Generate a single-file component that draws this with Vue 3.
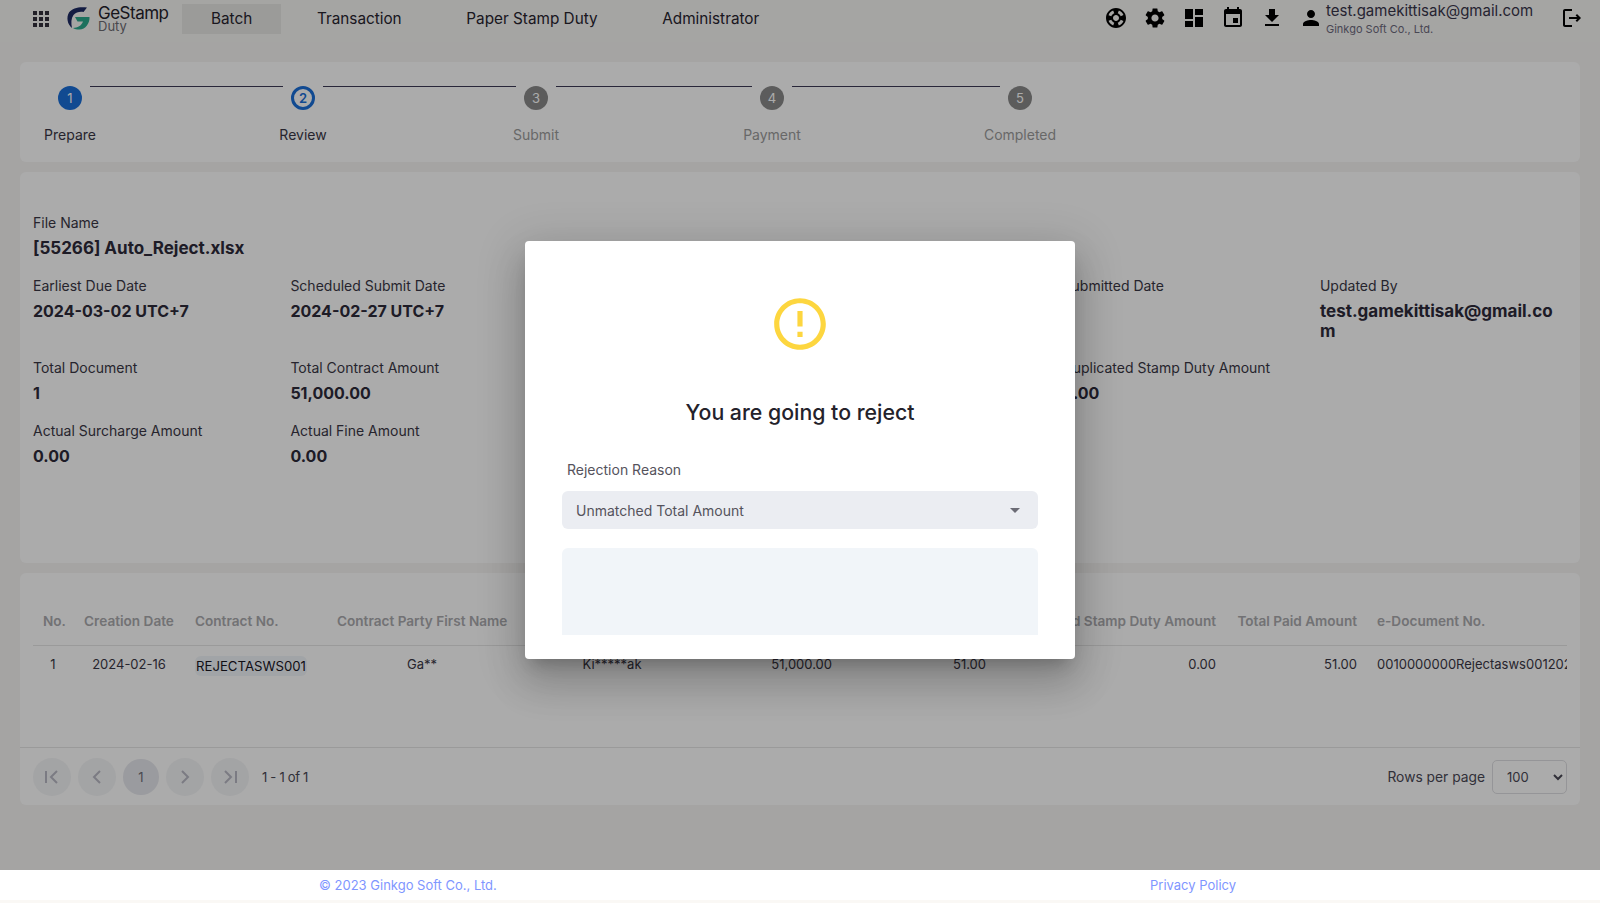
<script setup>
import { ref } from 'vue'

const navItems = ['Batch', 'Transaction', 'Paper Stamp Duty', 'Administrator']

const icons = {
  support: 'M12 2C6.48 2 2 6.48 2 12s4.48 10 10 10 10-4.48 10-10S17.52 2 12 2zm7.46 7.12l-2.78 1.15c-.51-1.36-1.58-2.44-2.95-2.94l1.15-2.78c2.1.8 3.77 2.47 4.58 4.57zM12 15c-1.66 0-3-1.34-3-3s1.34-3 3-3 3 1.34 3 3-1.34 3-3 3zM9.13 4.54l1.17 2.78c-1.38.5-2.47 1.59-2.98 2.97L4.54 9.13c.81-2.11 2.48-3.78 4.59-4.59zM4.54 14.87l2.78-1.15c.51 1.38 1.59 2.46 2.97 2.96l-1.17 2.78c-2.1-.81-3.77-2.48-4.58-4.59zm10.34 4.59l-1.15-2.78c1.37-.51 2.45-1.59 2.95-2.97l2.78 1.17c-.81 2.1-2.48 3.77-4.58 4.58z',
  settings: 'M19.14 12.94c.04-.3.06-.61.06-.94 0-.32-.02-.64-.07-.94l2.03-1.58c.18-.14.23-.41.12-.61l-1.92-3.32c-.12-.22-.37-.29-.59-.22l-2.39.96c-.5-.38-1.03-.7-1.62-.94l-.36-2.54c-.04-.24-.24-.41-.48-.41h-3.84c-.24 0-.43.17-.47.41l-.36 2.54c-.59.24-1.13.57-1.62.94l-2.39-.96c-.22-.08-.47 0-.59.22L2.74 8.87c-.12.21-.08.47.12.61l2.03 1.58c-.05.3-.09.63-.09.94s.02.64.07.94l-2.03 1.58c-.18.14-.23.41-.12.61l1.92 3.32c.12.22.37.29.59.22l2.39-.96c.5.38 1.03.7 1.62.94l.36 2.54c.05.24.24.41.48.41h3.84c.24 0 .44-.17.47-.41l.36-2.54c.59-.24 1.13-.56 1.62-.94l2.39.96c.22.08.47 0 .59-.22l1.92-3.32c.12-.22.07-.47-.12-.61l-2.01-1.58zM12 15.6c-1.98 0-3.6-1.62-3.6-3.6s1.62-3.6 3.6-3.6 3.6 1.62 3.6 3.6-1.62 3.6-3.6 3.6z',
  dashboard: 'M3 13h8V3H3v10zm0 8h8v-6H3v6zm10 0h8V11h-8v10zm0-18v6h8V3h-8z',
  event: 'M17 12h-5v5h5v-5zM16 1v2H8V1H6v2H5c-1.11 0-1.99.9-1.99 2L3 19c0 1.1.89 2 2 2h14c1.1 0 2-.9 2-2V5c0-1.1-.9-2-2-2h-1V1h-2zm3 18H5V8h14v11z',
  download: 'M19 9h-4V3H9v6H5l7 7 7-7zM5 18v2h14v-2H5z',
  person: 'M12 12c2.21 0 4-1.79 4-4s-1.79-4-4-4-4 1.79-4 4 1.79 4 4 4zm0 2c-2.67 0-8 1.34-8 4v2h16v-2c0-2.66-5.33-4-8-4z'
}

const steps = [
  { n: 1, label: 'Prepare', state: 'done', line: 193 },
  { n: 2, label: 'Review', state: 'current', line: 193 },
  { n: 3, label: 'Submit', state: 'todo', line: 196 },
  { n: 4, label: 'Payment', state: 'todo', line: 208 },
  { n: 5, label: 'Completed', state: 'todo', line: 0 }
]

const detailRows = [
  { cls: 'row-a', cells: [
    { label: 'Earliest Due Date', value: '2024-03-02 UTC+7' },
    { label: 'Scheduled Submit Date', value: '2024-02-27 UTC+7' },
    {},
    {},
    { label: 'Submitted Date', value: '' },
    { label: 'Updated By', value: 'test.gamekittisak@gmail.com' }
  ] },
  { cls: 'row-b', cells: [
    { label: 'Total Document', value: '1' },
    { label: 'Total Contract Amount', value: '51,000.00' },
    {},
    {},
    { label: 'Duplicated Stamp Duty Amount', value: '0.00' },
    {}
  ] },
  { cls: 'row-b', cells: [
    { label: 'Actual Surcharge Amount', value: '0.00' },
    { label: 'Actual Fine Amount', value: '0.00' },
    {},
    {},
    {},
    {}
  ] }
]

const columns = [
  { title: 'No.', width: 40, align: 'center', value: '1' },
  { title: 'Creation Date', width: 112, align: 'center', value: '2024-02-16' },
  { title: 'Contract No.', width: 142, align: 'left', value: 'REJECTASWS001', chip: true },
  { title: 'Contract Party First Name', width: 190, align: 'center', value: 'Ga**' },
  { title: 'Contract Party Last Name', width: 190, align: 'center', value: 'Ki*****ak' },
  { title: 'Contract Amount', width: 135, align: 'right', value: '51,000.00' },
  { title: 'Stamp Duty Amount', width: 154, align: 'right', value: '51.00' },
  { title: 'Duplicated Stamp Duty Amount', width: 230, align: 'right', value: '0.00' },
  { title: 'Total Paid Amount', width: 141, align: 'right', value: '51.00' },
  { title: 'e-Document No.', width: 200, align: 'left', value: '0010000000Rejectasws001202402160001' }
]

const rowsPerPage = ref(100)
</script>

<template>
  <div class="page">
    <header class="topbar">
      <svg class="apps" viewBox="0 0 24 24"><path d="M4 8h4V4H4v4zm6 12h4v-4h-4v4zm-6 0h4v-4H4v4zm0-6h4v-4H4v4zm6 0h4v-4h-4v4zm6-10v4h4V4h-4zm-6 4h4V4h-4v4zm6 6h4v-4h-4v4zm0 6h4v-4h-4v4z" /></svg>
      <div class="logo">
        <svg class="logo-mark" viewBox="0 0 24 24">
          <path d="M21 1.5 C14 0.5 6.5 1.5 3 6.5 C0 11.5 1.5 18.5 6 22 C5 17 5 12.5 7.5 9 C10 6 14 5.5 17.5 6 Z" fill="#1d2a63" />
          <path d="M9 11 H23.5 C24 17 19.5 23.5 13.5 23.5 C11 23.5 8.5 23 7 22 C11.5 22 15.5 20 17 15.6 H11.5 Z" fill="#2aa98b" />
        </svg>
        <div class="logo-text">
          <div class="logo-name">GeStamp</div>
          <div class="logo-sub">Duty</div>
        </div>
      </div>
      <nav class="nav">
        <a v-for="(item, i) in navItems" :key="item" class="nav-item" :class="{ active: i === 0 }">{{ item }}</a>
      </nav>
      <div class="tools">
        <svg v-for="(d, name) in icons" :key="name" class="tool" viewBox="0 0 24 24"><path :d="d" /></svg>
      </div>
      <div class="user">
        <div class="user-mail">test.gamekittisak@gmail.com</div>
        <div class="user-org">Ginkgo Soft Co., Ltd.</div>
      </div>
      <svg class="logout" viewBox="0 0 24 24"><path d="M17 8l-1.41 1.41L17.17 11H9v2h8.17l-1.58 1.58L17 16l4-4-4-4zM5 5h7V3H5c-1.1 0-2 .9-2 2v14c0 1.1.9 2 2 2h7v-2H5V5z" /></svg>
    </header>

    <main class="content">
      <section class="card stepper">
        <template v-for="step in steps" :key="step.n">
          <div class="step" :class="step.state">
            <div class="step-dot">{{ step.n }}</div>
            <div class="step-label">{{ step.label }}</div>
          </div>
          <div v-if="step.line" class="step-line" :style="{ width: step.line + 'px' }"></div>
        </template>
      </section>

      <section class="card details">
        <div class="file-label">File Name</div>
        <div class="file-value">[55266] Auto_Reject.xlsx</div>
        <div v-for="(row, r) in detailRows" :key="r" class="detail-row" :class="row.cls">
          <div v-for="(cell, c) in row.cells" :key="c" class="detail-cell">
            <div class="detail-label">{{ cell.label }}</div>
            <div class="detail-value">{{ cell.value }}</div>
          </div>
        </div>
      </section>

      <section class="card table-card">
        <div class="table-wrap">
          <table>
            <colgroup>
              <col v-for="col in columns" :key="col.title" :style="{ width: col.width + 'px' }" />
            </colgroup>
            <thead>
              <tr>
                <th v-for="col in columns" :key="col.title" :style="{ textAlign: col.align }">{{ col.title }}</th>
              </tr>
            </thead>
            <tbody>
              <tr>
                <td v-for="col in columns" :key="col.title" :style="{ textAlign: col.align }">
                  <span v-if="col.chip" class="chip">{{ col.value }}</span>
                  <template v-else>{{ col.value }}</template>
                </td>
              </tr>
            </tbody>
          </table>
        </div>
        <div class="pager">
          <div class="pager-btn">
            <svg viewBox="0 0 24 24"><path d="M6 6v12M17 6l-6 6 6 6" /></svg>
          </div>
          <div class="pager-btn">
            <svg viewBox="0 0 24 24"><path d="M15 6l-6 6 6 6" /></svg>
          </div>
          <div class="pager-btn current">1</div>
          <div class="pager-btn">
            <svg viewBox="0 0 24 24"><path d="M9 6l6 6-6 6" /></svg>
          </div>
          <div class="pager-btn">
            <svg viewBox="0 0 24 24"><path d="M18 6v12M7 6l6 6-6 6" /></svg>
          </div>
          <span class="pager-count">1 - 1 of 1</span>
          <span class="rows-label">Rows per page</span>
          <select v-model="rowsPerPage" class="rows-select">
            <option :value="100">100</option>
          </select>
        </div>
      </section>
    </main>

    <div class="overlay">
      <div class="modal">
        <svg class="warn" viewBox="0 0 24 24"><path d="M11 15h2v2h-2zm0-8h2v6h-2zm.99-5C6.47 2 2 6.48 2 12s4.47 10 9.99 10C17.52 22 22 17.52 22 12S17.52 2 11.99 2zM12 20c-4.42 0-8-3.58-8-8s3.58-8 8-8 8 3.58 8 8-3.58 8-8 8z" /></svg>
        <h2 class="modal-title">You are going to reject</h2>
        <label class="reason-label">Rejection Reason</label>
        <div class="reason-select">
          <span>Unmatched Total Amount</span>
          <i class="caret"></i>
        </div>
        <div class="reason-text"></div>
      </div>
    </div>

    <footer class="footer">
      <span class="copy">© 2023 Ginkgo Soft Co., Ltd.</span>
      <a class="privacy">Privacy Policy</a>
    </footer>
  </div>
</template>

<style>
html, body {
  margin: 0;
  background: #faf8f5;
}
</style>

<style scoped>
.page {
  position: relative;
  width: 1600px;
  height: 903px;
  overflow: hidden;
  display: flex;
  flex-direction: column;
  background: #faf8f5;
  font-family: Inter, "Open Sans", sans-serif;
  color: #2d2a3a;
}

.topbar {
  height: 42px;
  flex: none;
  display: flex;
  align-items: flex-start;
  background: #f7f6f4;
  box-shadow: 0 2px 6px rgba(0, 0, 0, 0.05);
}

.apps {
  width: 24px;
  height: 24px;
  margin: 7px 0 0 29px;
  fill: #33303c;
}

.logo {
  display: flex;
  margin: 6px 0 0 13px;
  width: 116px;
}

.logo-mark {
  width: 24px;
  height: 24px;
}

.logo-text {
  margin-left: 8px;
}

.logo-name {
  font-size: 17px;
  line-height: 15px;
  letter-spacing: -0.5px;
  color: #24222b;
}

.logo-sub {
  font-size: 13px;
  line-height: 10px;
  color: #6d6c72;
}

.nav {
  display: flex;
  margin-top: 4px;
  gap: 6.7px;
}

.nav-item {
  height: 30px;
  line-height: 30px;
  padding: 0 29px;
  font-size: 15.3px;
  color: #27242f;
}

.nav-item.active {
  background: #e8e7e5;
}

.tools {
  display: flex;
  gap: 15px;
  margin: 6px 0 0 auto;
}

.tool {
  width: 24px;
  height: 24px;
  fill: #000;
}

.user {
  margin-left: 3px;
  width: 234px;
}

.user-mail {
  font-size: 15px;
  line-height: 22px;
  color: #38354a;
}

.user-org {
  font-size: 11px;
  line-height: 14px;
  color: #6c6a7c;
}

.logout {
  width: 24px;
  height: 24px;
  margin: 6px 16px 0 0;
  fill: #000;
}

.content {
  flex: none;
  height: 828px;
  box-sizing: border-box;
  padding: 20px 20px 0;
  background: #f6f5f4;
  display: flex;
  flex-direction: column;
  gap: 10px;
}

.card {
  background: #fff;
  border-radius: 6px;
  box-sizing: border-box;
}

.stepper {
  height: 100px;
  padding: 24px 0 0 30px;
  display: flex;
  align-items: flex-start;
}

.step {
  width: 40px;
  display: flex;
  flex-direction: column;
  align-items: center;
  white-space: nowrap;
  flex: none;
}

.step-dot {
  width: 24px;
  height: 24px;
  box-sizing: border-box;
  border-radius: 50%;
  display: flex;
  align-items: center;
  justify-content: center;
  font-size: 13px;
  color: #fff;
  background: #8a8a8a;
}

.step.done .step-dot {
  background: #1a6fd9;
}

.step.current .step-dot {
  background: #fff;
  border: 3px solid #1a6fd9;
  color: #1a6fd9;
  font-weight: 600;
}

.step-label {
  font-size: 14px;
  line-height: 20px;
  margin-top: 15px;
  color: #3a3745;
}

.step.todo .step-label {
  color: #9c9c9c;
}

.step-line {
  flex: none;
  height: 1px;
  background: #3d3a55;
}

.details {
  height: 391px;
  padding: 41px 13px 0;
}

.file-label,
.detail-label {
  font-size: 14px;
  line-height: 20px;
  color: #3a3745;
}

.file-value {
  font-size: 17px;
  font-weight: 700;
  line-height: 26px;
  margin-top: 2px;
  color: #2d2a3a;
}

.detail-row {
  display: grid;
  grid-template-columns: repeat(6, 257.4px);
}

.row-a {
  margin-top: 15px;
  height: 82px;
}

.row-b {
  height: 63px;
}

.detail-value {
  font-size: 16px;
  font-weight: 700;
  line-height: 20px;
  margin-top: 5px;
  color: #2d2a3a;
  width: 238px;
  overflow-wrap: anywhere;
}

.detail-cell:nth-child(6) .detail-value {
  font-size: 17px;
}

.table-card {
  height: 232px;
  display: flex;
  flex-direction: column;
}

.table-wrap {
  height: 174px;
  box-sizing: border-box;
  margin: 0 13px;
  padding-top: 28px;
  overflow: hidden;
}

table {
  table-layout: fixed;
  border-collapse: collapse;
  width: 1534px;
}

th {
  height: 44px;
  box-sizing: border-box;
  padding: 0 10px 4px;
  font-size: 13.6px;
  font-weight: 600;
  color: #aaaaae;
  white-space: nowrap;
  overflow: hidden;
  border-bottom: 1px solid #e6e6e6;
}

td {
  height: 36px;
  padding: 0 10px;
  font-size: 13px;
  color: #3a3745;
  white-space: nowrap;
  overflow: hidden;
}

.chip {
  display: inline-block;
  padding: 0 1px;
  border-radius: 6px;
  background: #f1f5f9;
  font-size: 13.2px;
  line-height: 20px;
  margin-top: 4px;
  color: #18161f;
}

.pager {
  flex: 1;
  border-top: 1px solid #e6e6e6;
  box-sizing: border-box;
  padding: 0 13px;
  display: flex;
  align-items: center;
  gap: 7px;
}

.pager-btn {
  width: 38px;
  height: 38px;
  border-radius: 50%;
  background: #f4f5f7;
  display: flex;
  align-items: center;
  justify-content: center;
  font-size: 13px;
  color: #6e6e78;
}

.pager-btn.current {
  width: 36px;
  height: 36px;
  background: #e6e7ed;
}

.pager-btn svg {
  width: 24px;
  height: 24px;
  fill: none;
  stroke: #b8b8c4;
  stroke-width: 2;
}

.pager-count {
  margin-left: 6px;
  font-size: 13px;
  letter-spacing: -0.3px;
  color: #4a4855;
}

.rows-label {
  margin-left: auto;
  font-size: 13.8px;
  color: #4a4855;
}

.rows-select {
  width: 75px;
  height: 34px;
  padding: 0 10px;
  border: 1px solid #dfdfe3;
  border-radius: 5px;
  background: #fff;
  font-family: inherit;
  font-size: 13px;
  color: #4a4855;
}

.overlay {
  position: absolute;
  inset: 0 0 3px;
  background: rgba(0, 0, 0, 0.33);
  display: flex;
  align-items: center;
  justify-content: center;
  z-index: 5;
}

.modal {
  width: 550px;
  height: 418px;
  box-sizing: border-box;
  padding: 52px 37px 0;
  background: #fff;
  border-radius: 4px;
  box-shadow: 0 11px 15px -7px rgba(0, 0, 0, 0.2), 0 24px 38px 3px rgba(0, 0, 0, 0.14), 0 9px 46px 8px rgba(0, 0, 0, 0.12);
  display: flex;
  flex-direction: column;
}

.warn {
  width: 62px;
  height: 62px;
  flex: none;
  align-self: center;
  fill: #fdd63f;
}

.modal-title {
  margin: 41px 0 0;
  font-size: 21.3px;
  font-weight: 500;
  line-height: 32px;
  text-align: center;
  color: #24222b;
}

.reason-label {
  margin: 32px 0 0 5px;
  font-size: 14px;
  line-height: 20px;
  color: #55535c;
}

.reason-select {
  margin-top: 11px;
  height: 38px;
  flex: none;
  padding: 0 14px;
  border-radius: 6px;
  background: #ebedf2;
  display: flex;
  align-items: center;
  justify-content: space-between;
  font-size: 14px;
  color: #55535c;
}

.caret {
  border-left: 5px solid transparent;
  border-right: 5px solid transparent;
  border-top: 5px solid #6b6b75;
  margin-right: 4px;
}

.reason-text {
  margin-top: 19px;
  height: 87px;
  flex: none;
  background: #f1f5f9;
  border-radius: 6px 6px 0 0;
}

.footer {
  position: relative;
  z-index: 6;
  height: 30px;
  flex: none;
  background: #fff;
  display: flex;
  align-items: center;
  font-size: 13px;
  color: #7f96ff;
}

.copy {
  margin-left: 319px;
  width: 831px;
}
</style>
